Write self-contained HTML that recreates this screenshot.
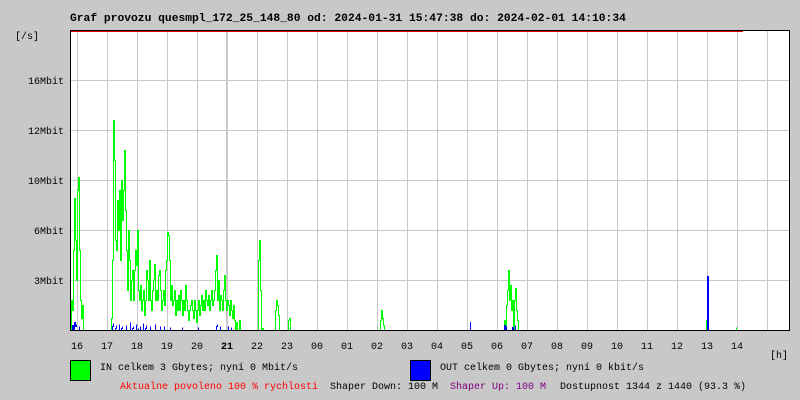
<!DOCTYPE html>
<html><head><meta charset="utf-8"><style>
body{margin:0;width:800px;height:400px;background:#c8c8c8;overflow:hidden;position:relative;font-family:"Liberation Mono",monospace;}
.t{position:absolute;white-space:pre;font-size:10px;line-height:10px;color:#000}
.title{font-weight:bold;font-size:11.3px;top:14px;left:70px}
</style></head><body>
<div class="t title">Graf provozu quesmpl_172_25_148_80 od: 2024-01-31 15:47:38 do: 2024-02-01 14:10:34</div>
<svg width="800" height="400" style="position:absolute;left:0;top:0" shape-rendering="crispEdges">
<rect x="70" y="30" width="720" height="300" fill="#fff"/>
<g stroke="#c8c8c8" stroke-width="1">
<path d="M77.5 31V330M107.5 31V330M137.5 31V330M167.5 31V330M197.5 31V330M257.5 31V330M287.5 31V330M317.5 31V330M347.5 31V330M377.5 31V330M407.5 31V330M437.5 31V330M467.5 31V330M497.5 31V330M527.5 31V330M557.5 31V330M587.5 31V330M617.5 31V330M647.5 31V330M677.5 31V330M707.5 31V330M737.5 31V330M767.5 31V330"/>
<path d="M70 80.5H790M70 130.5H790M70 180.5H790M70 230.5H790M70 280.5H790M64 80.5H70M64 130.5H70M64 180.5H70M64 230.5H70M64 280.5H70"/>
</g>
<path d="M227 31V330" stroke="#c8c8c8" stroke-width="2"/>
<g id="gr" stroke="#00ff00" stroke-width="1" fill="none"></g>
<g id="bl" stroke="#0000ff" stroke-width="1" fill="none"></g>
<path d="M707.5 330V276M708.5 330V276M470.5 330V322" stroke="#0000ff"/>
<path d="M70 31.5H743" stroke="#e00000" stroke-width="1"/>
<path d="M70 30.5H790M70.5 30V331M789.5 30V331M70 330.5H790" stroke="#000" stroke-width="1" fill="none"/>
<rect x="70.5" y="360.5" width="20" height="20" fill="#00ff00" stroke="#000"/>
<rect x="410.5" y="360.5" width="20" height="20" fill="#0000ff" stroke="#000"/>
</svg>
<script>
var G=[[71,300],[72,310],[73,250],[74,198],[75,240],[76,280],[77,190],[78,177],[79,250],[80,300],[81,318],[82,305],[83,330],
[110,330],[111,318],[112,260],[113,120],[114,160],[115,240],[116,250],[117,200],[118,230],[119,190],[120,260],[121,180],[122,220],[123,190],[124,150],[125,210],[126,250],[127,290],[128,230],[129,260],[130,300],[131,280],[132,270],[133,300],[134,270],[135,250],[136,265],[137,230],[138,290],[139,300],[140,285],[141,310],[142,300],[143,290],[144,315],[145,300],[146,270],[147,280],[148,300],[149,260],[150,300],[151,310],[152,290],[153,280],[154,264],[155,300],[156,290],[157,300],[158,275],[159,270],[160,290],[161,310],[162,300],[163,290],[164,305],[165,270],[166,260],[167,232],[168,235],[169,260],[170,300],[171,285],[172,305],[173,300],[174,290],[175,315],[176,300],[177,310],[178,295],[179,310],[180,290],[181,300],[182,315],[183,300],[184,310],[185,285],[186,300],[187,310],[188,320],[189,310],[190,305],[191,300],[192,310],[193,318],[194,300],[195,310],[196,322],[197,310],[198,300],[199,315],[200,305],[201,295],[202,310],[203,300],[204,310],[205,290],[206,300],[207,305],[208,295],[209,310],[210,300],[211,290],[212,305],[213,300],[214,290],[215,270],[216,255],[217,300],[218,280],[219,310],[220,295],[221,300],[222,310],[223,290],[224,275],[225,300],[226,310],[227,300],[228,305],[229,315],[230,300],[231,310],[232,318],[233,305],[234,320],[235,330],[236,322],[237,330],[239,320],[240,330],
[257,330],[258,260],[259,240],[260,290],[261,330],[262,328],[263,330],[275,310],[276,300],[277,305],[278,315],[279,330],[288,320],[289,318],[290,330],
[380,320],[381,310],[382,318],[383,325],[384,330],
[504,320],[505,330],[506,305],[507,290],[508,270],[509,300],[510,285],[511,310],[512,300],[513,330],[514,300],[515,288],[516,310],[517,320],[518,330],
[706,320],[707,312],[708,330],[736,327],[738,330]];
var B=[[71,330],[72,325],[73,330],[74,322],[75,326],[76,324],[78,330],[79,326],[81,330],[111,330],[112,326],[113,323],[115,328],[116,325],[118,330],[119,324],[121,328],[122,326],[124,330],[126,325],[128,330],[130,322],[132,328],[133,326],[135,330],[136,324],[138,328],[140,326],[142,330],[143,323],[145,328],[146,325],[148,330],[150,326],[152,330],[155,324],[157,330],[160,326],[162,330],[164,326],[166,330],[170,327],[172,330],[182,327],[184,330],[198,327],[200,330],[216,326],[217,324],[219,330],[220,326],[222,330],[228,326],[230,330],[231,327],[233,330],[504,325],[505,330],[506,326],[508,330],[512,327],[513,330],[515,325],[517,330]];
function mk(a,id){var s="",py=330,i;for(i=0;i<a.length;i++){var x=a[i][0]+.5,y=a[i][1]+.5;if(i==0||a[i][0]-a[i-1][0]>1){s+="M"+x+" 330.5V"+y;}else{s+="H"+x+"V"+y;}py=y;}
var p=document.createElementNS("http://www.w3.org/2000/svg","path");p.setAttribute("d",s);document.getElementById(id).appendChild(p);}
mk(G,"gr");mk(B,"bl");
</script>
<div class="t" style="left:15px;top:33px">[/s]</div>
<div class="t" style="left:28px;top:78px;width:36px;text-align:right">16Mbit</div>
<div class="t" style="left:28px;top:128px;width:36px;text-align:right">12Mbit</div>
<div class="t" style="left:28px;top:178px;width:36px;text-align:right">10Mbit</div>
<div class="t" style="left:28px;top:228px;width:36px;text-align:right">6Mbit</div>
<div class="t" style="left:28px;top:278px;width:36px;text-align:right">3Mbit</div>
<div class="t" style="left:71px;top:343px">16</div>
<div class="t" style="left:101px;top:343px">17</div>
<div class="t" style="left:131px;top:343px">18</div>
<div class="t" style="left:161px;top:343px">19</div>
<div class="t" style="left:191px;top:343px">20</div>
<div class="t" style="left:221px;top:343px;font-weight:bold">21</div>
<div class="t" style="left:251px;top:343px">22</div>
<div class="t" style="left:281px;top:343px">23</div>
<div class="t" style="left:311px;top:343px">00</div>
<div class="t" style="left:341px;top:343px">01</div>
<div class="t" style="left:371px;top:343px">02</div>
<div class="t" style="left:401px;top:343px">03</div>
<div class="t" style="left:431px;top:343px">04</div>
<div class="t" style="left:461px;top:343px">05</div>
<div class="t" style="left:491px;top:343px">06</div>
<div class="t" style="left:521px;top:343px">07</div>
<div class="t" style="left:551px;top:343px">08</div>
<div class="t" style="left:581px;top:343px">09</div>
<div class="t" style="left:611px;top:343px">10</div>
<div class="t" style="left:641px;top:343px">11</div>
<div class="t" style="left:671px;top:343px">12</div>
<div class="t" style="left:701px;top:343px">13</div>
<div class="t" style="left:731px;top:343px">14</div>
<div class="t" style="left:770px;top:352px">[h]</div>
<div class="t" style="left:100px;top:364px">IN celkem 3 Gbytes; nyní 0 Mbit/s</div>
<div class="t" style="left:440px;top:364px">OUT celkem 0 Gbytes; nyní 0 kbit/s</div>
<div class="t" style="left:120px;top:383px;color:#ff0000">Aktualne povoleno 100 % rychlosti</div>
<div class="t" style="left:330px;top:383px">Shaper Down: 100 M</div>
<div class="t" style="left:450px;top:383px;color:#800080">Shaper Up: 100 M</div>
<div class="t" style="left:560px;top:383px">Dostupnost 1344 z 1440 (93.3 %)</div>
</body></html>
